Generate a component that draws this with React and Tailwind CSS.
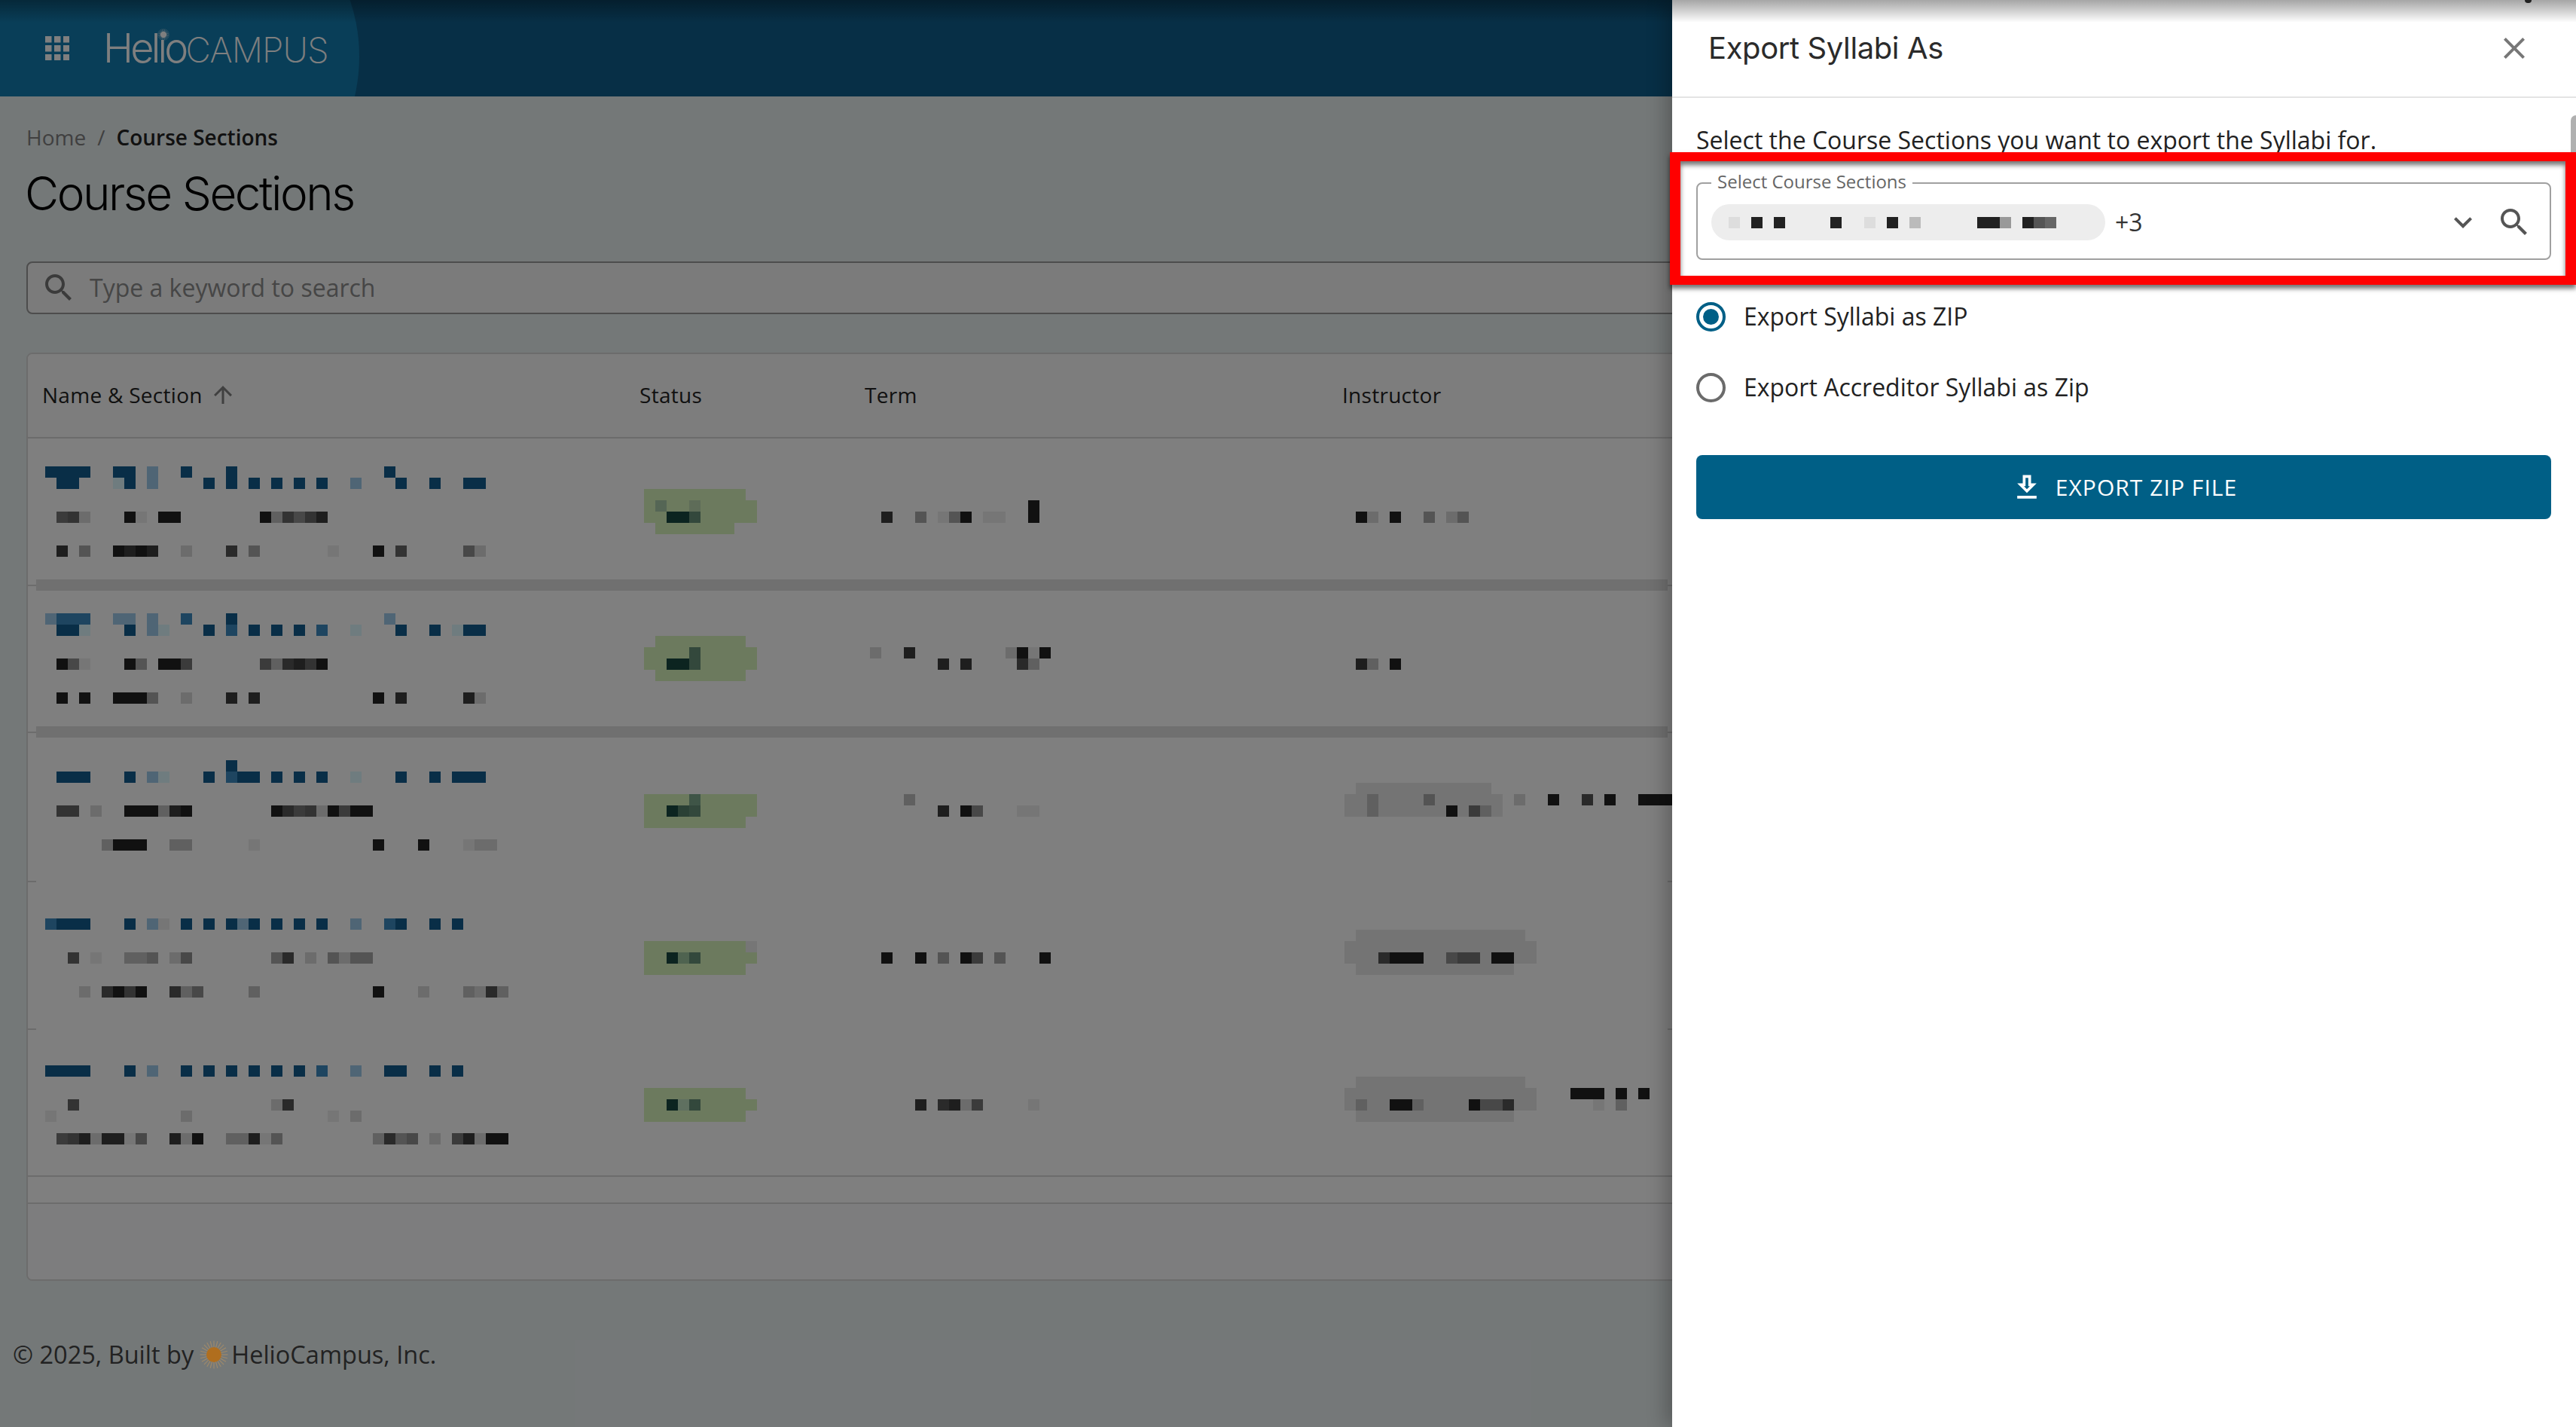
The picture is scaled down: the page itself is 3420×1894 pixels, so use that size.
import React from 'react';

const SHADES = {
  1: '#222222', 2: '#3c3c3c', 3: '#555555', 4: '#666666', 5: '#777777',
  6: '#909090', 7: '#a8a8a8', 8: '#c0c0c0', 9: '#d8d8d8', 0: '#ececec',
  A: '#135c8e', B: '#3c8ac0', C: '#9ecaea', D: '#def8ff',
  G: '#d8f4bc', H: '#184840', I: '#669078', J: '#aaccaa', K: '#bcd8b0',
  L: '#7eaa8e', N: '#9ec6a0', O: '#bee0c0', P: '#54806a', Q: '#e8e8e8',
  a: '#dddddd', b: '#bbbbbb', c: '#999999',
};

const ROWS = [
  {
    top: 582, height: 187, sep: 15, band: true,
    name: [
      [619, '0-3:A 6-7:A 9:C 12:A 16:A 30:A'],
      [634, '1-2:A 6:D 7:A 9:C 14:A 16:A 18:A 20:A 22:A 24:A 27:C 31:A 34:A 37-38:A'],
      [679, '1:5 2:4 3:9 7:1 8:0 10-11:1 19:1 20:8 21:4 22:6 23:4 24:2'],
      [724, '1:2 3:7 6:1 7:2 8:1 9:2 12:9 16:3 18:7 25:0 29:1 31:4 37:6 38:9'],
    ],
    status: [
      [649, '53-61:G'],
      [664, '53-62:G 54:J 57:K'],
      [679, '53-62:G 55-56:H 57:I'],
      [694, '54-60:G'],
    ],
    term: [
      [664, '87:1'],
      [679, '74:2 77:7 79:0 80:7 81:1 83-84:0 87:1'],
    ],
    instructor: [[679, '116:1 117:9 119:1 122:7 124:9 125:7']],
  },
  {
    top: 784, height: 180, sep: 15, band: true,
    name: [
      [814, '0:C 1-3:B 6-7:C 9:C 12:B 16:A 30:C'],
      [829, '1-2:A 3:D 7:A 9:C 10:D 14:A 16:B 18:A 20:A 22:A 24:B 27:D 31:A 34:A 36:D 37-38:A'],
      [874, '1:1 2:6 3:0 7:1 8:7 10-11:1 12:5 19:5 20:8 21:3 22:2 23:4 24:1'],
      [919, '1:1 3:1 6-8:1 9:7 12:9 16:2 18:2 29:1 31:2 37:2 38:9'],
    ],
    status: [
      [844, '54-61:G'],
      [859, '53-62:G 57:I'],
      [874, '53-62:G 55-56:H 57:I'],
      [889, '54-61:G'],
    ],
    term: [
      [859, '73:9 76:2 85:9 86:1 87:0 88:1'],
      [874, '79:2 81:2 86:3 87:8'],
    ],
    instructor: [[874, '116:2 117:8 119:1']],
  },
  {
    top: 979, height: 183, sep: 15, band: false,
    name: [
      [1009, '16:A'],
      [1024, '1-3:A 7:A 9:C 10:D 14:A 16:B 17-18:A 20:A 22:A 24:A 27:D 31:A 34:A 36-38:A'],
      [1069, '1-2:4 4:9 7-9:1 10:8 11:2 12:1 20:1 21:3 22:5 23:4 24:9 25:1 26:5 27-28:1'],
      [1114, '5:8 6-8:1 11-12:8 18:0 29:1 33:1 37:0 38-39:9'],
    ],
    status: [
      [1054, '53-62:G 57:L'],
      [1069, '53-62:G 55:H 56:P 57:I'],
      [1084, '53-61:G'],
    ],
    term: [
      [1054, '76:8'],
      [1069, '79:2 81:1 82:6 86-87:0'],
    ],
    instructor: [
      [1039, '116-127:Q'],
      [1054, '115-128:Q 117:8 122:7 130:9 133:1 136:3 138:1 141-143:1'],
      [1069, '115-128:Q 117:8 124:1 126:5 127:8'],
    ],
  },
  {
    top: 1177, height: 181, sep: 15, band: false,
    name: [
      [1219, '0:B 1-3:A 7:A 9:C 10:0 12:A 14:A 16:A 17:C 18:A 20:A 22:A 24:A 27:C 30:B 31:A 34:A 36:A'],
      [1264, '2:4 4:0 7-8:8 9:7 11:9 12:6 20:7 21:3 23:9 25:7 26:9 27-28:7'],
      [1309, '3:9 5:3 6:1 7:4 8:1 11:3 12:8 13:6 18:8 29:1 33:9 37:8 38:9 39:3 40:8'],
    ],
    status: [
      [1249, '53-61:G 62:0'],
      [1264, '53-62:G 55:H 56:N 57:I'],
      [1279, '53-61:G'],
    ],
    term: [[1264, '74:1 77:1 79:7 81:1 82:5 84:7 88:1']],
    instructor: [
      [1234, '116-130:Q'],
      [1249, '115-131:Q'],
      [1264, '115-131:Q 118:3 119-121:1 124:6 125-126:5 128-129:1'],
      [1279, '116-129:Q'],
    ],
  },
  {
    top: 1373, height: 187, sep: 0, band: false,
    name: [
      [1414, '0-3:A 7:A 9:C 12:A 14:A 16:A 18:A 20:A 22:A 24:B 27:C 30-31:A 34:A 36:A'],
      [1459, '2:4 20:9 21:3'],
      [1474, '0:0 12:9 25:0 27:9'],
      [1504, '1:5 2:4 3:2 4:9 5:2 6:2 7:0 8:6 11:2 12:9 13:1 16-17:8 18:2 19:0 20:7 29:8 30:3 31:7 32:6 34:9 36:5 37:2 38:9 39-40:1'],
    ],
    status: [
      [1444, '53-61:G'],
      [1459, '53-62:G 55:H 56:O 57:I'],
      [1474, '53-61:G'],
    ],
    term: [[1459, '77:2 79:3 80:2 81:9 82:5 87:0']],
    instructor: [
      [1429, '116-130:Q'],
      [1444, '115-131:Q 135-137:1 139:1 141:1'],
      [1459, '115-131:Q 116:8 119-120:1 121:8 126:1 127-128:6 129:3 137:0 139:8'],
      [1474, '116-129:Q'],
    ],
  },
];

const CHIP_PIXELS = [[0, '0:a 2:1 4:1 9:1 12:a 14:1 16:b 22-23:1 24:c 26:1 27:3 28:4']];

// the blurred-out text is a drawing: 15px blocks on a shared grid
function Mosaic({ lines, startK = 0, top = 0, width, height }) {
  const rects = [];
  lines.forEach(([y, tokens]) => {
    tokens.split(' ').forEach((token) => {
      const [range, shade] = token.split(':');
      const [from, to = from] = range.split('-').map(Number);
      for (let k = from; k <= to; k++) {
        rects.push(
          <rect
            key={`${y}-${k}-${shade}`}
            x={(k - startK) * 15}
            y={y - top}
            width={15}
            height={15}
            fill={SHADES[shade]}
          />
        );
      }
    });
  });
  return (
    <svg width={width} height={height} className="block shrink-0" shapeRendering="crispEdges">
      {rects}
    </svg>
  );
}

function MuiIcon({ d, size = 48, className = '' }) {
  return (
    <svg width={size} height={size} viewBox="0 0 24 24" fill="currentColor" className={`shrink-0 ${className}`}>
      <path d={d} />
    </svg>
  );
}

const SEARCH = 'M15.5 14h-.79l-.28-.27C15.41 12.59 16 11.11 16 9.5 16 5.91 13.09 3 9.5 3S3 5.91 3 9.5 5.91 16 9.5 16c1.61 0 3.09-.59 4.23-1.57l.27.28v.79l5 4.99L20.49 19l-4.99-5zm-6 0C7.01 14 5 11.99 5 9.5S7.01 5 9.5 5 14 7.01 14 9.5 11.99 14 9.5 14z';
const CLOSE = 'M19 6.41 17.59 5 12 10.59 6.41 5 5 6.41 10.59 12 5 17.59 6.41 19 12 13.41 17.59 19 19 17.59 13.41 12z';
const CHEVRON = 'M16.59 8.59 12 13.17 7.41 8.59 6 10l6 6 6-6z';
const DOWNLOAD = 'M19 9h-4V3H9v6H5l7 7 7-7zm-8 2V5h2v6h1.17L12 13.17 9.83 11H11zm-6 7h14v2H5z';
const ARROW_UP = 'M4 12l1.41 1.41L11 7.83V20h2V7.83l5.58 5.59L20 12l-8-8-8 8z';

function Sun({ size, core, ray }) {
  const spokes = Array.from({ length: 24 }, (_, i) => (i * Math.PI) / 12);
  return (
    <svg width={size} height={size} viewBox="0 0 40 40" className="shrink-0">
      {spokes.map((a) => (
        <line
          key={a}
          x1={20 + 10 * Math.cos(a)}
          y1={20 + 10 * Math.sin(a)}
          x2={20 + 19.5 * Math.cos(a)}
          y2={20 + 19.5 * Math.sin(a)}
          stroke={ray}
          strokeWidth="1.2"
        />
      ))}
      <circle cx="20" cy="20" r="10.5" fill={core} />
    </svg>
  );
}

function AppsIcon() {
  const cells = [0, 12, 24];
  return (
    <svg width="32" height="32" viewBox="0 0 32 32" className="shrink-0" fill="#ffffff">
      {cells.map((y) => cells.map((x) => <rect key={`${x}-${y}`} x={x} y={y} width="8.5" height="8.5" />))}
    </svg>
  );
}

function TableRow({ row }) {
  return (
    <>
      <div className="flex pl-[23px]" style={{ height: row.height }}>
        <div className="w-[795px] shrink-0">
          <Mosaic lines={row.name} top={row.top} width={795} height={row.height} />
        </div>
        <div className="w-[300px] shrink-0">
          <Mosaic lines={row.status} startK={53} top={row.top} width={300} height={row.height} />
        </div>
        <div className="w-[630px] shrink-0">
          <Mosaic lines={row.term} startK={73} top={row.top} width={630} height={row.height} />
        </div>
        <div className="flex-1">
          <Mosaic lines={row.instructor} startK={115} top={row.top} width={1000} height={row.height} />
        </div>
      </div>
      {row.sep > 0 && (
        <div className="flex items-center" style={{ height: row.sep }}>
          <div className="w-[11px] h-[2px] bg-[#d8d8d8]" />
          <div className={`w-[2166px] h-full ${row.band ? 'bg-[#e0e0e0]' : ''}`} />
          <div className="flex-1 h-[2px] bg-[#d8d8d8]" />
        </div>
      )}
    </>
  );
}

export default function App() {
  return (
    <div className="relative w-[3420px] h-[1894px] overflow-hidden bg-[#e9f0f1] font-['Open_Sans',sans-serif]">
      {/* Top bar */}
      <header className="relative h-[128px] overflow-hidden bg-[#0f5f8c]">
        <div className="absolute left-0 top-[-159px] w-[477px] h-[468px] rounded-r-[234px] bg-[#127cb0]" />
        <div className="relative flex items-center h-full pl-[60px]">
          <AppsIcon />
          <div className="relative flex items-baseline ml-[45px] text-white font-['Inter',sans-serif]">
            <span className="text-[54px] leading-none font-light tracking-[-0.07em]">Helio</span>
            <span className="text-[46px] leading-none font-extralight tracking-[-0.02em]">CAMPUS</span>
            <div className="absolute left-[72px] top-[1px]">
              <Sun size={16} core="#ffffff" ray="#ffffff" />
            </div>
          </div>
        </div>
      </header>

      {/* Page */}
      <main className="px-[35px]">
        <nav className="flex items-center pt-[34px] h-[74px] text-[28px] leading-[40px]">
          <span className="text-[#808080]">Home</span>
          <span className="mx-[15px] text-[#808080]">/</span>
          <span className="font-semibold text-[#222222]">Course Sections</span>
        </nav>
        <h1 className="mt-[15px] -ml-[2px] font-['Inter',sans-serif] font-light text-[62px] leading-[80px] tracking-[-0.04em] text-black">
          Course Sections
        </h1>
        <div className="mt-[50px] flex items-center h-[70px] pl-[17px] gap-[17px] rounded-lg border-2 border-[#9a9a9a] bg-[#f6f6f6]">
          <MuiIcon d={SEARCH} className="text-[#777777]" />
          <span className="text-[32px] text-[#8c8c8c]">Type a keyword to search</span>
        </div>

        <section className="mt-[51px] flex flex-col h-[1232px] rounded-lg border-2 border-[#d8d8d8] bg-white overflow-hidden">
          <div className="flex items-center h-[112px] shrink-0 pb-[3px] border-b-2 border-[#d8d8d8] bg-[#fafafa] text-[28px] tracking-[0.01em] text-[#222222]">
            <div className="flex items-center w-[812px] shrink-0 pl-[19px]">
              Name &amp; Section
              <MuiIcon d={ARROW_UP} size={36} className="ml-[9px] text-[#808080]" />
            </div>
            <div className="w-[299px] shrink-0">Status</div>
            <div className="w-[634px] shrink-0">Term</div>
            <div className="flex-1">Instructor</div>
          </div>
          {ROWS.map((row) => (
            <TableRow key={row.top} row={row} />
          ))}
          <div className="h-[38px] shrink-0 border-y-2 border-[#d8d8d8]" />
          <div className="flex-1 bg-[#fbfbfc]" />
        </section>

        <footer className="-ml-[18px] mt-[76px] flex items-center h-[44px] text-[32.5px] text-[#444444]">
          <span>© 2025, Built by</span>
          <div className="relative z-20 ml-[8px] mr-[4px]">
            <Sun size={38} core="#b06e1e" ray="#a08a6a" />
          </div>
          <span>HelioCampus, Inc.</span>
        </footer>
      </main>

      {/* Scrim */}
      <div className="absolute inset-0 z-10 bg-black/50" />

      {/* Export drawer */}
      <aside className="absolute right-0 top-0 bottom-0 z-30 w-[1200px] bg-white shadow-[-8px_0_24px_rgba(0,0,0,0.25)]">
        <div className="flex items-center justify-between h-[130px] pl-[48px] pr-[58px] border-b-2 border-[#e4e4e4]">
          <h2 className="font-['Inter',sans-serif] text-[40px] leading-[48px] tracking-[-0.01em] text-[#2b2b2b]">
            Export Syllabi As
          </h2>
          <MuiIcon d={CLOSE} className="text-[#777777]" />
        </div>
        <div className="pl-[32px] pr-[33px]">
          <p className="mt-[34px] text-[32px] leading-[44px] text-[#222222] whitespace-nowrap">
            Select the Course Sections you want to export the Syllabi for.
          </p>

          <fieldset className="mt-[25px] h-[112px] rounded-lg border-2 border-[#a0a0a0] px-[18px]">
            <legend className="ml-0 px-[8px] text-[24px] leading-[20px] text-[#666666] -translate-y-[2px]">
              Select Course Sections
            </legend>
            <div className="flex items-center mt-[18px]">
              <div className="flex items-center w-[523px] h-[48px] shrink-0 rounded-full bg-[#ededed] pl-[23px]">
                <Mosaic lines={CHIP_PIXELS} width={480} height={15} />
              </div>
              <span className="ml-[13px] text-[32px] text-[#333333]">+3</span>
              <div className="flex items-center ml-auto mr-[5px] gap-[20px]">
                <MuiIcon d={CHEVRON} className="text-[#555555]" />
                <MuiIcon d={SEARCH} className="text-[#555555]" />
              </div>
            </div>
          </fieldset>

          <label className="mt-[55px] flex items-center h-[40px] gap-[24px] text-[32px] text-[#222222]">
            <span className="flex items-center justify-center w-[39px] h-[39px] rounded-full border-[4px] border-[#005f86]">
              <span className="w-[21px] h-[21px] rounded-full bg-[#005f86]" />
            </span>
            Export Syllabi as ZIP
          </label>
          <label className="mt-[54px] flex items-center h-[40px] gap-[24px] text-[32px] text-[#222222]">
            <span className="w-[39px] h-[39px] rounded-full border-[4px] border-[#6b6b6b]" />
            Export Accreditor Syllabi as Zip
          </label>

          <button className="mt-[70px] flex items-center justify-center w-full h-[85px] gap-[16px] rounded-lg bg-[#005f86] text-white text-[30px] font-medium tracking-[0.035em]">
            <MuiIcon d={DOWNLOAD} size={44} />
            EXPORT ZIP FILE
          </button>
        </div>
        {/* Scrollbar thumb */}
        <div className="absolute right-0 top-[153px] w-[7px] h-[80px] rounded-tl-[7px] bg-[#b0b0b0]" />
      </aside>

      {/* Browser edge shadow along the top */}
      <div className="absolute inset-x-0 top-0 z-40 h-[30px] bg-gradient-to-b from-black/35 to-transparent" />
      {/* Tip of the mouse pointer at the window edge */}
      <div className="absolute left-[3352px] top-0 z-40 w-[9px] h-[4px] rounded-b-sm bg-[#222222]" />

      {/* Annotation box */}
      <div className="absolute left-[2217px] right-0 top-[202px] h-[176px] z-50 border-x-[14px] border-y-[12px] border-[#ff0000] shadow-[0_5px_6px_rgba(0,0,0,0.55),inset_0_5px_6px_rgba(0,0,0,0.55)]" />
    </div>
  );
}
